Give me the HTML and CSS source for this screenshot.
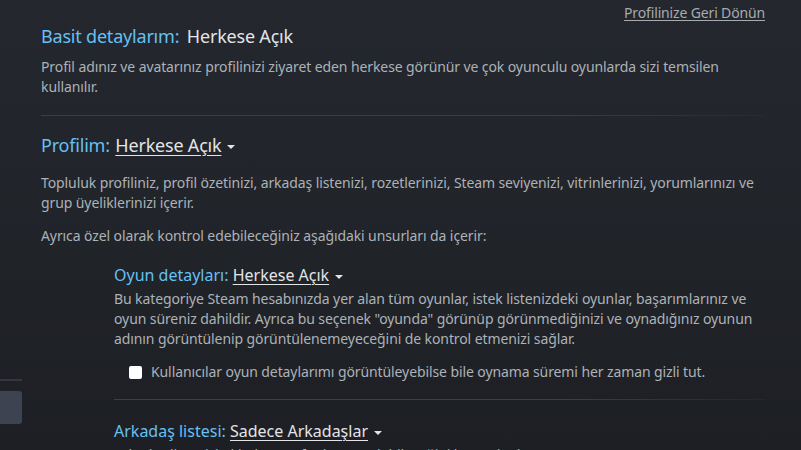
FILE: index.html
```html
<!DOCTYPE html>
<html lang="tr">
<head>
<meta charset="utf-8">
<title>Gizlilik Ayarları</title>
<link rel="stylesheet" href="styles.css">
</head>
<body>
<div class="page">
  <aside class="sidebar">
    <div class="side-rule"></div>
    <div class="side-item"></div>
  </aside>
  <main class="main">
    <div class="topbar"><a class="back-link" href="#">Profilinize Geri Dönün</a></div>

    <section class="section">
      <h2 class="heading"><span class="label">Basit detaylarım:</span> <span class="value">Herkese Açık</span></h2>
      <p class="desc">Profil adınız ve avatarınız profilinizi ziyaret eden herkese görünür ve çok oyunculu oyunlarda sizi temsilen kullanılır.</p>
    </section>

    <hr class="rule">

    <section class="section">
      <h2 class="heading with-dd"><span class="label">Profilim:</span> <span class="dropdown"><span class="dd-value">Herkese Açık</span><span class="caret"></span></span></h2>
      <p class="desc">Topluluk profiliniz, profil özetinizi, arkadaş listenizi, rozetlerinizi, Steam seviyenizi, vitrinlerinizi, yorumlarınızı ve grup üyeliklerinizi içerir.</p>
      <p class="desc">Ayrıca özel olarak kontrol edebileceğiniz aşağıdaki unsurları da içerir:</p>

      <div class="sub">
        <h3 class="subheading"><span class="label">Oyun detayları:</span> <span class="dropdown"><span class="dd-value">Herkese Açık</span><span class="caret"></span></span></h3>
        <p class="desc tight">Bu kategoriye Steam hesabınızda yer alan tüm oyunlar, istek listenizdeki oyunlar, başarımlarınız ve oyun süreniz dahildir. Ayrıca bu seçenek "oyunda" görünüp görünmediğinizi ve oynadığınız oyunun adının görüntülenip görüntülenemeyeceğini de kontrol etmenizi sağlar.</p>
        <label class="check"><span class="box"></span><span>Kullanıcılar oyun detaylarımı görüntüleyebilse bile oynama süremi her zaman gizli tut.</span></label>
        <hr class="rule sub-rule">
        <h3 class="subheading"><span class="label">Arkadaş listesi:</span> <span class="dropdown"><span class="dd-value">Sadece Arkadaşlar</span><span class="caret"></span></span></h3>
        <p class="desc tight">Arkadaş listenizin kimler tarafından görülebileceğini kontrol eder.</p>
      </div>
    </section>
  </main>
</div>
</body>
</html>
```

FILE: styles.css
```css
html, body {
  margin: 0;
  padding: 0;
}
body {
  background: linear-gradient(180deg, #24272e 0%, #202328 60%, #1d1f24 100%);
  font-family: "Noto Sans", "Open Sans", sans-serif;
  color: #acb2b8;
  height: 450px;
  overflow: hidden;
}
.page {
  display: flex;
  align-items: flex-start;
}
.sidebar {
  width: 22px;
  flex: none;
  padding-top: 379px;
}
.side-rule {
  height: 2px;
  background: #34373e;
}
.side-item {
  margin-top: 10px;
  height: 33px;
  background: #3d4350;
  border-radius: 0 3px 3px 0;
}
.main {
  margin-left: 19px;
  width: 724px;
}
.topbar {
  display: flex;
  justify-content: flex-end;
  padding-top: 3px;
  height: 20px;
}
.back-link {
  color: #a7abaf;
  font-size: 14px;
  line-height: 20px;
  letter-spacing: -0.15px;
  text-decoration: underline;
  text-underline-offset: 2px;
}
.section {
  margin: 0;
}
.heading {
  margin: 0;
  font-size: 18px;
  font-weight: normal;
  line-height: 26px;
  letter-spacing: -0.2px;
}
.heading.with-dd {
  padding-bottom: 7px;
}
.label {
  color: #66c0f4;
}
.value {
  color: #e3e4e6;
  margin-left: 3px;
}
.dropdown {
  margin-left: 1px;
  color: #e3e4e6;
  white-space: nowrap;
}
.dd-value {
  text-decoration: underline;
  text-underline-offset: 3px;
  text-decoration-thickness: 1px;
}
.caret {
  display: inline-block;
  width: 0;
  height: 0;
  margin-left: 6px;
  vertical-align: middle;
  border-left: 4px solid transparent;
  border-right: 4px solid transparent;
  border-top: 4px solid #e3e4e6;
}
.desc {
  margin: 8px 0 0;
  font-size: 14px;
  line-height: 20px;
  letter-spacing: -0.1px;
}
.desc + .desc {
  margin-top: 13px;
}
.rule {
  border: 0;
  height: 1px;
  margin: 18px 0 16px;
  background: linear-gradient(90deg, #3b3e45 0%, #3b3e45 70%, rgba(59,62,69,0.2) 100%);
}
.sub {
  margin-left: 73px;
  margin-top: 18px;
}
.subheading {
  margin: 0;
  font-size: 16px;
  font-weight: normal;
  line-height: 22px;
}
.subheading .dropdown {
  margin-left: 0;
}
.desc.tight {
  margin-top: 3px;
}
.check {
  display: flex;
  align-items: center;
  margin: 13px 0 0 15px;
  font-size: 14px;
  line-height: 20px;
  letter-spacing: -0.1px;
  gap: 9px;
}
.box {
  width: 13px;
  height: 13px;
  background: #ffffff;
  border-radius: 2px;
  flex: none;
}
.sub-rule {
  margin: 17px 0 20px;
}
```
